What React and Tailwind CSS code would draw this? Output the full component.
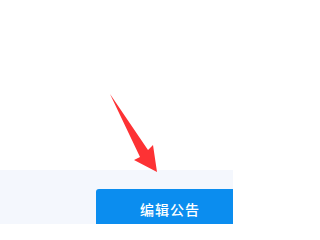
export default function App() {
  return (
    <div className="relative w-[233px] h-[224px] overflow-hidden bg-white" style={{ fontFamily: '"Noto Sans CJK SC", "Noto Sans", sans-serif' }}>
      <div className="h-[170px] bg-white" />
      <div className="h-[54px] bg-[#f4f7fd] pl-[96px] pt-[19px]">
        <div className="w-[148px] h-[40px] shrink-0 rounded-[3px] bg-[#0b8def] flex items-center justify-center text-white text-[14px] font-medium tracking-[1px]">
          编辑公告
        </div>
      </div>
      <svg className="absolute left-0 top-0" width="233" height="224" viewBox="0 0 233 224">
        <polygon points="110,94 148,150 153,145 157,172 134,160 140,157" fill="#fd3234" />
      </svg>
    </div>
  );
}
